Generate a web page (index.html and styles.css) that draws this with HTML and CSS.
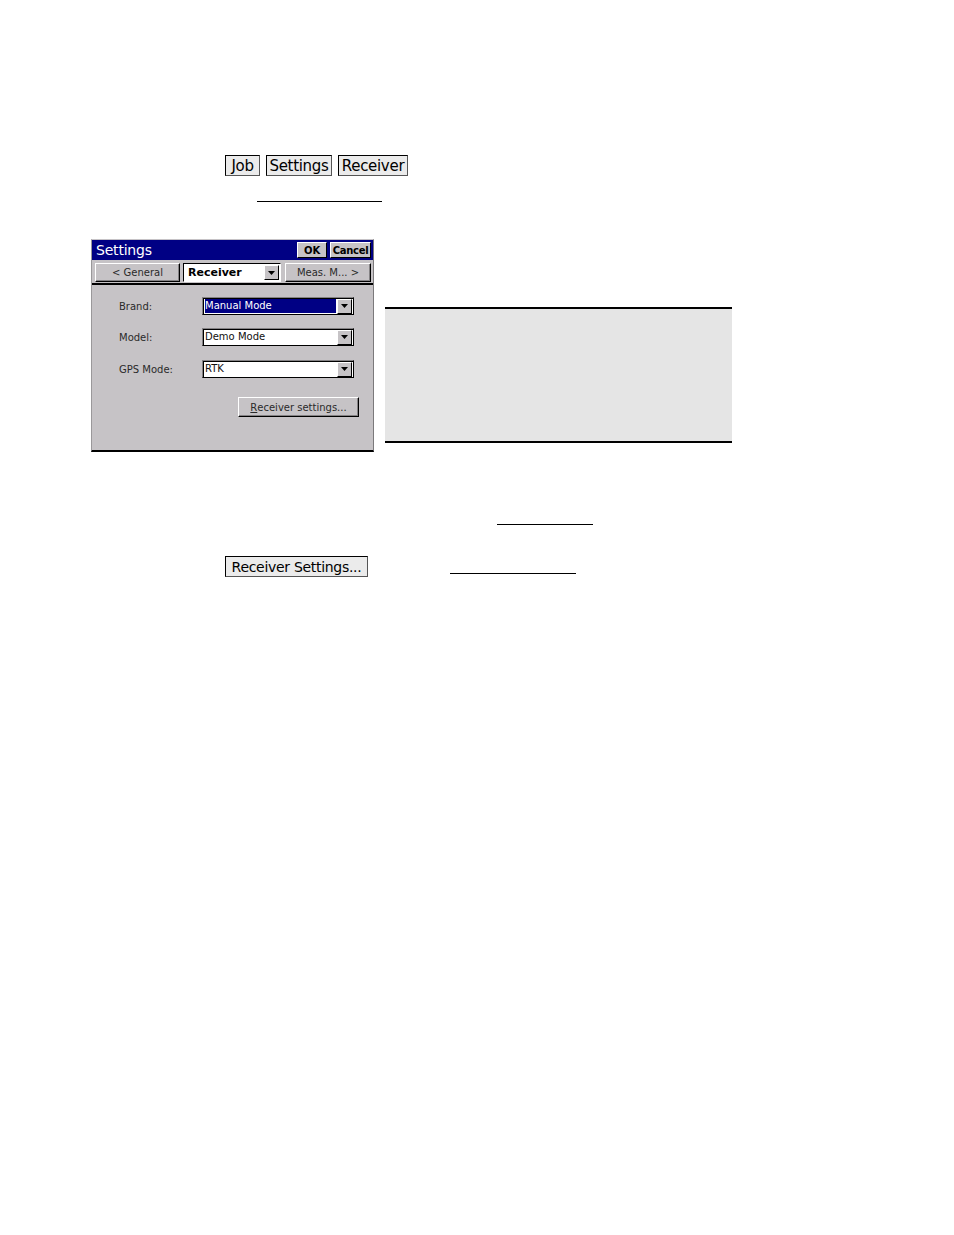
FILE: index.html
```html
<!DOCTYPE html>
<html>
<head>
<meta charset="utf-8">
<link rel="stylesheet" href="styles.css">
</head>
<body>
<div class="doc">
  <div class="nav-row">
    <span class="key key-job">Job</span>
    <span class="key key-settings">Settings</span>
    <span class="key key-receiver">Receiver</span>
  </div>
  <div class="rule rule-1"></div>

  <div class="figure-row">
    <div class="dialog">
      <div class="titlebar">
        <span class="title">Settings</span>
        <span class="tbtn ok">OK</span>
        <span class="tbtn cancel">Cancel</span>
      </div>
      <div class="tabrow">
        <span class="wbtn tab-prev">&lt; General</span>
        <span class="tabcombo">
          <span class="tabcombo-text">Receiver</span>
          <span class="arrow"><svg width="7" height="4" viewBox="0 0 7 4"><path d="M0 0H7L3.5 4Z" fill="#000"/></svg></span>
        </span>
        <span class="wbtn tab-next">Meas. M... &gt;</span>
      </div>
      <div class="body">
        <div class="field">
          <span class="label">Brand:</span>
          <span class="combo"><span class="combo-text sel">Manual Mode</span><span class="arrow"><svg width="7" height="4" viewBox="0 0 7 4"><path d="M0 0H7L3.5 4Z" fill="#000"/></svg></span></span>
        </div>
        <div class="field">
          <span class="label">Model:</span>
          <span class="combo"><span class="combo-text">Demo Mode</span><span class="arrow"><svg width="7" height="4" viewBox="0 0 7 4"><path d="M0 0H7L3.5 4Z" fill="#000"/></svg></span></span>
        </div>
        <div class="field">
          <span class="label">GPS Mode:</span>
          <span class="combo"><span class="combo-text">RTK</span><span class="arrow"><svg width="7" height="4" viewBox="0 0 7 4"><path d="M0 0H7L3.5 4Z" fill="#000"/></svg></span></span>
        </div>
        <div class="btn-row">
          <span class="wbtn rs-btn"><u>R</u>eceiver settings...</span>
        </div>
      </div>
    </div>
    <div class="note-box"></div>
  </div>

  <div class="rule rule-2"></div>
  <div class="bottom-row">
    <span class="key key-big">Receiver Settings...</span>
    <div class="rule rule-3"></div>
  </div>
</div>
</body>
</html>
```

FILE: styles.css
```css
html, body {
  margin: 0;
  padding: 0;
  background: #fff;
}
body {
  font-family: "DejaVu Sans", Verdana, sans-serif;
  color: #000;
}
.doc {
  width: 954px;
  height: 1235px;
  padding-top: 155px;
  box-sizing: border-box;
}

/* top keys */
.nav-row {
  display: flex;
  gap: 6px;
  margin-left: 225px;
  height: 21px;
}
.key {
  display: inline-flex;
  align-items: center;
  justify-content: center;
  height: 21px;
  box-sizing: border-box;
  border: 1px solid #000;
  border-right-color: #555;
  border-bottom-color: #555;
  background: #ebebeb;
  font-size: 15px;
  letter-spacing: -0.3px;
  line-height: 1;
  padding-top: 1px;
}
.key-job { width: 35px; }
.key-settings { width: 66px; }
.key-receiver { width: 70px; }
.rule {
  height: 1px;
  background: #000;
}
.rule-1 {
  margin-left: 257px;
  width: 125px;
  margin-top: 25px;
}

/* figure */
.figure-row {
  display: flex;
  align-items: flex-start;
  margin-top: 37px;
  margin-left: 91px;
}
.dialog {
  width: 283px;
  height: 213px;
  box-sizing: border-box;
  background: #c6c3c6;
  border-left: 1px solid #9a989a;
  border-right: 1px solid #7b797b;
  border-top: 1px solid #c6c3c6;
  border-bottom: 2px solid #000;
  font-family: "DejaVu Sans", Tahoma, sans-serif;
  font-size: 10px;
  display: flex;
  flex-direction: column;
}
.titlebar {
  height: 20px;
  background: #000084;
  display: flex;
  align-items: center;
  padding: 0 2px 0 4px;
  gap: 3px;
}
.title {
  color: #fff;
  font-size: 14px;
  flex: 1;
  letter-spacing: -0.2px;
}
.tbtn {
  height: 16px;
  box-sizing: border-box;
  background: #c6c3c6;
  border: 1px solid #000;
  border-top-color: #fff;
  border-left-color: #fff;
  display: inline-flex;
  align-items: center;
  justify-content: center;
  font-weight: bold;
  font-size: 10px;
}
.tbtn.ok { width: 30px; }
.tbtn.cancel { width: 41px; font-size: 10px; letter-spacing: -0.3px; }

.tabrow {
  height: 25px;
  display: flex;
  align-items: flex-start;
  padding: 3px 2px 0 3px;
  box-sizing: border-box;
  gap: 3px;
  border-bottom: 2px solid #000;
}
.wbtn {
  display: inline-flex;
  align-items: center;
  justify-content: center;
  box-sizing: border-box;
  background: #c6c3c6;
  border: 1px solid #000;
  border-top-color: #fff;
  border-left-color: #fff;
  box-shadow: inset -1px -1px 0 #848284;
  color: #2a2a2a;
  font-size: 10px;
}
.tab-prev { width: 85px; height: 19px; }
.tab-next { width: 86px; height: 19px; margin-left: 1px; }
.tabcombo {
  width: 98px;
  height: 19px;
  box-sizing: border-box;
  background: #fff;
  border: 1px solid #000;
  border-right-color: #fff;
  border-bottom-color: #fff;
  display: flex;
  align-items: center;
}
.tabcombo-text {
  flex: 1;
  font-weight: bold;
  font-size: 11px;
  padding-left: 4px;
}
.arrow {
  width: 15px;
  height: 15px;
  box-sizing: border-box;
  background: #c6c3c6;
  border: 1px solid #000;
  border-top-color: #fff;
  border-left-color: #fff;
  display: flex;
  align-items: center;
  justify-content: center;
  margin-right: 1px;
}

.body {
  flex: 1;
  padding: 12px 0 0 27px;
}
.field {
  display: flex;
  align-items: center;
  height: 18px;
  margin-bottom: 13px;
}
.field:nth-child(2) { margin-bottom: 14px; }
.label {
  width: 83px;
  color: #2a2a2a;
}
.combo {
  width: 152px;
  height: 18px;
  box-sizing: border-box;
  background: #fff;
  border: 1px solid #000;
  border-top-color: #848284;
  border-left-color: #848284;
  box-shadow: inset 1px 1px 0 #000;
  display: flex;
  align-items: center;
  padding-left: 2px;
}
.combo-text {
  flex: 1;
  height: 14px;
  line-height: 14px;
  margin-right: 1px;
  color: #111;
}
.combo-text.sel {
  background: #000084;
  color: #fff;
}
.btn-row {
  display: flex;
  padding-left: 119px;
  margin-top: 19px;
}
.rs-btn {
  width: 121px;
  height: 20px;
  box-shadow: inset -1px -1px 0 #848284;
}

.note-box {
  margin-left: 11px;
  margin-top: 68px;
  width: 347px;
  height: 136px;
  box-sizing: border-box;
  background: #e5e5e5;
  border-top: 2px solid #000;
  border-bottom: 2px solid #000;
}

.rule-2 {
  margin-left: 497px;
  width: 96px;
  margin-top: 72px;
}
.bottom-row {
  display: flex;
  align-items: flex-start;
  margin-top: 31px;
  margin-left: 225px;
}
.key-big {
  width: 143px;
  height: 21px;
  font-size: 14px;
}
.rule-3 {
  margin-left: 82px;
  margin-top: 17px;
  width: 126px;
}
```
